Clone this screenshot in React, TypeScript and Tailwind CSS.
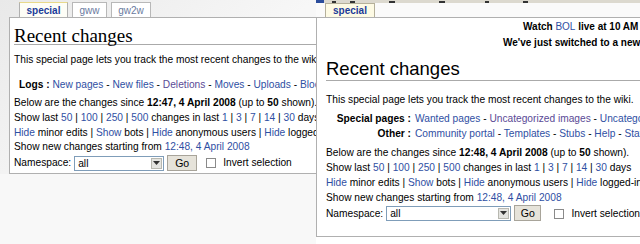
import React from "react";

const L = "text-[#2f4fa3]";
const V = "text-[#5a4a96]";

function Sel({ w }: { w: string }) {
  return (
    <span className={`inline-flex items-stretch h-[15px] border border-[#7f9db9] bg-white ${w} align-middle`}>
      <span className="flex-1 pl-[3px] leading-[13px]">all</span>
      <span className="w-[11px] my-[1px] mr-[1px] bg-[#e4e4e0] border border-[#b8b8b0] flex items-center justify-center">
        <svg width="7" height="4" viewBox="0 0 7 4"><path d="M0 0h7L3.5 4z" fill="#333" /></svg>
      </span>
    </span>
  );
}

function Go({ w }: { w: string }) {
  return (
    <span className={`inline-flex items-center justify-center h-[16px] ${w} bg-[#e6e3da] border border-[#a8a49a] align-middle text-[10.5px]`}>
      Go
    </span>
  );
}

function Cb() {
  return <span className="inline-block w-[10px] h-[10px] border border-[#8a8a8a] bg-white align-middle" />;
}

export default function App() {
  return (
    <div
      className="w-[640px] h-[244px] overflow-hidden flex bg-white text-black text-[10.2px]"
      style={{ fontFamily: '"Liberation Sans", Arial, sans-serif' }}
    >
      {/* Left panel */}
      <div className="w-[316px] shrink-0 flex flex-col overflow-hidden bg-gradient-to-br from-[#e9e9e9] via-[#f7f7f7] to-[#f8f8f8]">
        <div className="h-[17px] flex items-end pl-[19px] gap-[4px] shrink-0">
          <div className="w-[49px] h-[15px] border border-b-0 border-[#b0b0b0] bg-[#fdfdf6] border-t-[#e8d98a] flex items-center justify-center font-bold text-[10px] text-[#1b3b9a]">
            special
          </div>
          <div className="w-[35px] h-[15px] border border-b-0 border-[#b8b8b8] bg-white flex items-center justify-center text-[10px] text-[#6a7aa0]">
            gww
          </div>
          <div className="w-[40px] h-[15px] border border-b-0 border-[#b8b8b8] bg-white flex items-center justify-center text-[10px] text-[#6a7aa0]">
            gw2w
          </div>
        </div>
        <div className="ml-[9px] h-[157px] shrink-0 bg-white border border-r-0 border-[#b0b0b0] pl-[4px] overflow-hidden whitespace-nowrap">
          <div
            className="mt-[9px] leading-[17px] text-[19px] border-b border-[#aaa] h-[18px]"
            style={{ fontFamily: '"Liberation Serif", "Times New Roman", serif' }}
          >
            Recent changes
          </div>
          <div className="mt-[7px] leading-[15px]">This special page lets you track the most recent changes to the wiki.</div>
          <div className="mt-[10px] leading-[15px] pl-[5px]">
            <b>Logs :</b> <span className={L}>New pages</span> - <span className={L}>New files</span> -{" "}
            <span className={V}>Deletions</span> - <span className={L}>Moves</span> - <span className={L}>Uploads</span> -{" "}
            <span className={L}>Block log</span>
          </div>
          <div className="mt-[4px] leading-[14.8px]">
            <div>
              Below are the changes since <b>12:47, 4 April 2008</b> (up to <b>50</b> shown).
            </div>
            <div>
              Show last <span className={L}>50</span> | <span className={L}>100</span> | <span className={L}>250</span> |{" "}
              <span className={L}>500</span> changes in last <span className={L}>1</span> | <span className={L}>3</span> |{" "}
              <span className={L}>7</span> | <span className={L}>14</span> | <span className={L}>30</span> days
            </div>
            <div>
              <span className={L}>Hide</span> minor edits | <span className={L}>Show</span> bots | <span className={L}>Hide</span>{" "}
              anonymous users | <span className={L}>Hide</span> logged-in users
            </div>
            <div>
              Show new changes starting from <span className={L}>12:48, 4 April 2008</span>
            </div>
            <div className="flex items-center gap-[3px] h-[16px]">
              <span>Namespace:</span>
              <Sel w="w-[90px]" />
              <Go w="w-[30px]" />
              <span className="ml-[6px]"><Cb /></span>
              <span className="ml-[4px]">Invert selection</span>
            </div>
          </div>
        </div>
        <div className="flex-1 bg-[#f8f8f8]" />
      </div>

      {/* Right panel */}
      <div className="flex-1 flex flex-col bg-white min-w-0 overflow-hidden">
        <div className="h-[3px] shrink-0 bg-[#dcd9cf] relative flex items-start gap-[14px] pl-[16px]">
          <span className="absolute left-0 top-0 w-[8px] h-[3px] bg-[#2b4d9c]" />
          <span className="mt-[1px] w-[4px] h-[2px] bg-[#333]" />
          <span className="mt-[1px] w-[5px] h-[2px] bg-[#333]" />
          <span className="mt-[1px] ml-[20px] w-[6px] h-[2px] bg-[#333]" />
          <span className="mt-[1px] ml-[30px] w-[6px] h-[2px] bg-[#333]" />
          <span className="mt-[1px] ml-[26px] w-[4px] h-[2px] bg-[#333]" />
          <span className="mt-[1px] ml-[20px] w-[5px] h-[2px] bg-[#333]" />
        </div>
        <div className="h-[14px] shrink-0 pl-[9px] bg-[#fafafa]">
          <div className="w-[50px] h-[14px] border border-b-0 border-[#b5b09a] bg-[#fdfae4] flex items-center justify-center font-bold text-[10px] text-[#1b3b9a]">
            special
          </div>
        </div>
        <div className="h-[220px] border border-r-0 border-[#b0b0b0] pl-[9px] overflow-hidden whitespace-nowrap shrink-0">
          <div className="mt-[1px] leading-[16px] font-bold text-[10px] pl-[197px]">
            <div>
              Watch <span className="text-[#2f4fa3] font-normal">BOL</span> live at 10 AM PST on Saturday
            </div>
            <div className="-ml-[20px]">We've just switched to a new theme</div>
          </div>
          <div className="mt-[8px] leading-[20px] text-[18.5px] pb-[1px] border-b border-[#aaa]">Recent changes</div>
          <div className="mt-[10.5px] leading-[15px]">This special page lets you track the most recent changes to the wiki.</div>
          <div className="mt-[4px] leading-[15px] grid grid-cols-[85px_1fr] gap-x-[4px]">
            <b className="text-right">Special pages :</b>
            <span>
              <span className={L}>Wanted pages</span> - <span className={V}>Uncategorized images</span> -{" "}
              <span className={L}>Uncategorized pages</span>
            </span>
            <b className="text-right">Other :</b>
            <span>
              <span className={L}>Community portal</span> - <span className={L}>Templates</span> -{" "}
              <span className={L}>Stubs</span> - <span className={L}>Help</span> - <span className={L}>Statistics</span>
            </span>
          </div>
          <div className="mt-[4px] leading-[15px]">
            <div>
              Below are the changes since <b>12:48, 4 April 2008</b> (up to <b>50</b> shown).
            </div>
            <div>
              Show last <span className={L}>50</span> | <span className={L}>100</span> | <span className={L}>250</span> |{" "}
              <span className={L}>500</span> changes in last <span className={L}>1</span> | <span className={L}>3</span> |{" "}
              <span className={L}>7</span> | <span className={L}>14</span> | <span className={L}>30</span> days
            </div>
            <div>
              <span className={L}>Hide</span> minor edits | <span className={L}>Show</span> bots | <span className={L}>Hide</span>{" "}
              anonymous users | <span className={L}>Hide</span> logged-in users
            </div>
            <div>
              Show new changes starting from <span className={L}>12:48, 4 April 2008</span>
            </div>
            <div className="flex items-center gap-[3px] h-[17px]">
              <span>Namespace:</span>
              <Sel w="w-[128px]" />
              <Go w="w-[28px]" />
              <span className="ml-[10px]"><Cb /></span>
              <span className="ml-[4px]">Invert selection</span>
            </div>
          </div>
        </div>
        <div className="flex-1 bg-white" />
      </div>
    </div>
  );
}
